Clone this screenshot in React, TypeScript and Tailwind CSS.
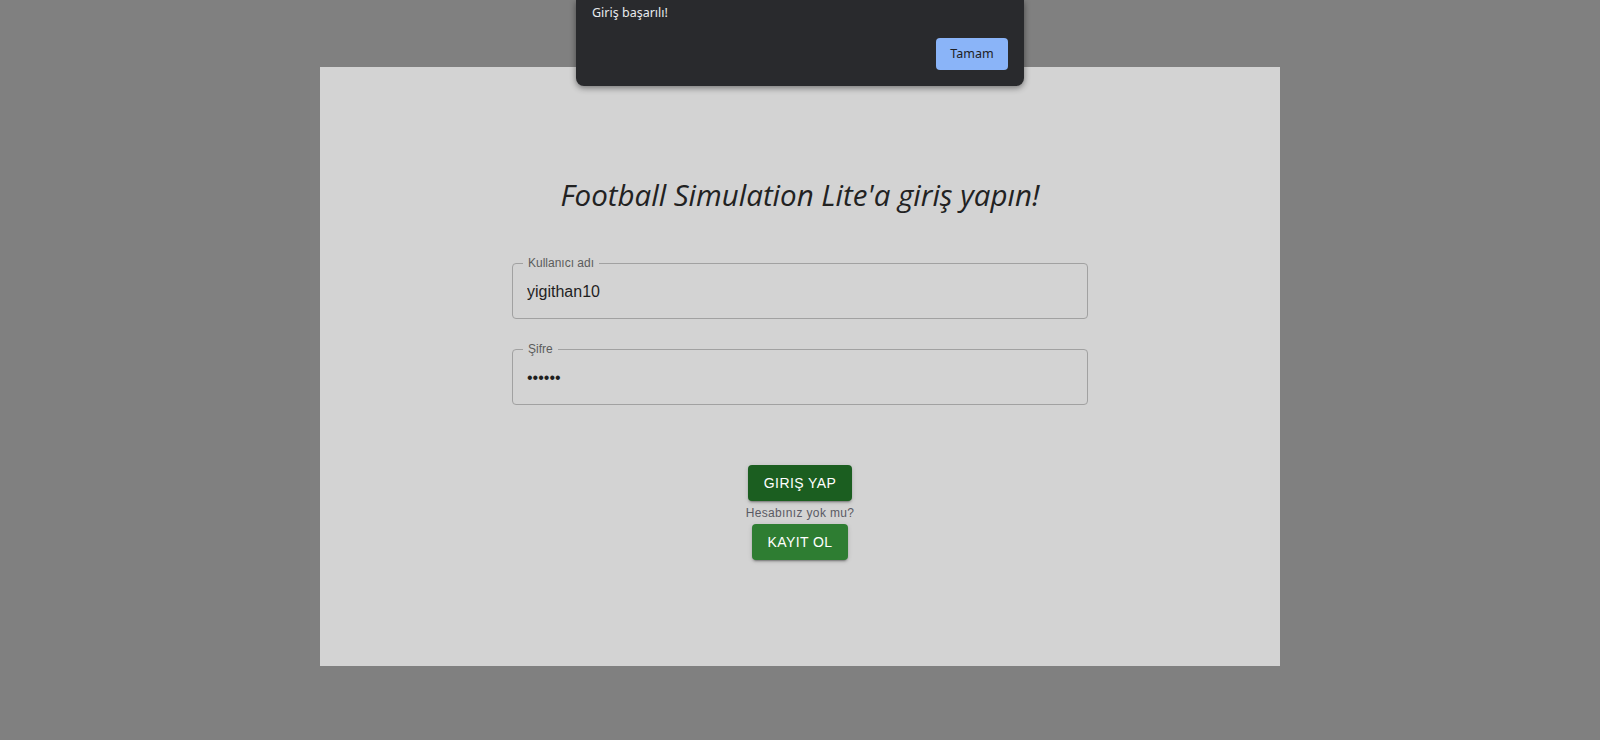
import React from 'react';

const OutlinedField = ({ label, value, type = 'text' }: { label: string; value: string; type?: string }) => {
    return (
        <div className="relative h-[56px] w-[576px] rounded-[4px] border border-[#a1a1a1]">
            <span className="absolute left-[10px] top-[-9px] bg-[#d3d3d3] px-[5px] text-[12px] leading-[16px] text-[#5c5c5c]">
                {label}
            </span>
            <input
                type={type}
                value={value}
                readOnly
                className="h-full w-full bg-transparent px-[14px] pt-[1px] text-[16px] text-[#1f1f1f] outline-none"
                style={{ fontFamily: '"Liberation Sans", Arial, sans-serif' }}
            />
        </div>
    );
};

export default function App() {
    return (
        <div
            className="relative flex h-[740px] w-full justify-center bg-[#808080] pt-[67px]"
            style={{ fontFamily: '"Liberation Sans", Arial, sans-serif' }}
        >
            {/* Login card */}
            <main className="flex h-[599px] w-[960px] flex-col items-center bg-[#d3d3d3]">
                <h1
                    className="mt-[107px] text-[29.5px] font-normal italic leading-[42px] text-[#222]"
                    style={{ fontFamily: '"Open Sans", sans-serif' }}
                >
                    Football Simulation Lite'a giriş yapın!
                </h1>

                <div className="mt-[47px] flex flex-col gap-[30px]">
                    <OutlinedField label="Kullanıcı adı" value="yigithan10" />
                    <OutlinedField label="Şifre" value="123456" type="password" />
                </div>

                <button className="mt-[60px] h-[36px] w-[104px] rounded-[4px] bg-[#1b5e20] text-[14px] tracking-[0.4px] text-white shadow-[0_3px_1px_-2px_rgba(0,0,0,0.2),0_2px_2px_0_rgba(0,0,0,0.14),0_1px_5px_0_rgba(0,0,0,0.12)]">
                    GIRIŞ YAP
                </button>
                <p className="mt-[3px] text-[12px] leading-[18px] tracking-[0.35px] text-[#5a5a64]">Hesabınız yok mu?</p>
                <button className="mt-[2px] h-[36px] w-[96px] rounded-[4px] bg-[#2e7d32] text-[14px] tracking-[0.4px] text-white shadow-[0_3px_1px_-2px_rgba(0,0,0,0.2),0_2px_2px_0_rgba(0,0,0,0.14),0_1px_5px_0_rgba(0,0,0,0.12)]">
                    KAYIT OL
                </button>
            </main>

            {/* Browser alert */}
            <div
                className="absolute left-[576px] top-0 flex h-[86px] w-[448px] flex-col rounded-b-[8px] bg-[#292a2d] px-[16px] pt-[4px] shadow-[0_2px_6px_rgba(0,0,0,0.45)]"
                style={{ fontFamily: '"Noto Sans", sans-serif' }}
            >
                <p className="text-[12.5px] leading-[18px] text-[#e8eaed]">Giriş başarılı!</p>
                <div className="mt-[16px] flex justify-end">
                    <button className="h-[32px] w-[72px] rounded-[4px] bg-[#8ab4f8] text-[12.5px] text-[#202124]">
                        Tamam
                    </button>
                </div>
            </div>
        </div>
    );
}
